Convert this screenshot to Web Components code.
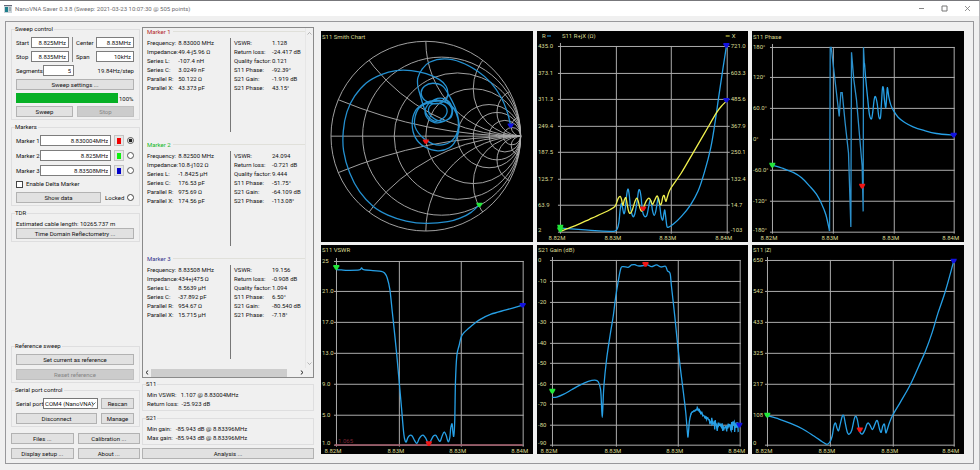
<!DOCTYPE html>
<html lang="en">
<head>
<meta charset="utf-8">
<title>NanoVNA Saver</title>
<style>
body { margin: 0; background: #f0f0f0; font: 6px/9px Roboto, "Liberation Sans", sans-serif; color: #111; }
</style>
</head>
<body>
<vna-window caption="NanoVNA Saver 0.3.8 (Sweep: 2021-03-23 10:07:30 @ 505 points)">
  <vna-controls></vna-controls>
  <vna-readout></vna-readout>
  <vna-charts></vna-charts>
</vna-window>

<script>
const define = (name, markup, setup) => {
  const template = document.createElement('template');
  customElements.define(name, class extends HTMLElement {
    constructor() { super(); this.attachShadow({ mode: 'open' }); }
    connectedCallback() {
      if (this.shadowRoot.childNodes.length) return;
      template.innerHTML = typeof markup === 'function' ? markup(this) : markup;
      this.shadowRoot.append(template.content.cloneNode(true));
      if (setup) setup(this, this.shadowRoot);
    }
  });
};

define('vna-window', el => `
<style>
  :host { display: block; box-sizing: border-box; min-height: 100vh; border-top: 1px solid #77777b; border-right: 1px solid #b5b5b8; }
  header { display: flex; align-items: center; gap: 3px; height: 15px; padding: 0 6px 0 4px; background: #fff; color: #6c6c70; }
  h1 { flex: 1; margin: 0; font: inherit; }
  nav { display: flex; gap: 12px; }
  nav button { width: 11px; height: 11px; padding: 0; border: 0; background: none; display: grid; place-items: center; }
  svg { display: block; }
  main { display: grid; grid-template-columns: 129px 172px minmax(0, 1fr); column-gap: 2px; margin: 5px 5px 4px; padding: 3px 9px 4px 5px; border: 1px solid #98989b; }
</style>
<header>
  <svg width="8" height="8" viewBox="0 0 8 8"><rect width="8" height="8" fill="#c9d3d8"/><rect width="8" height="1" fill="#667"/><rect x="1" y="2" width="3" height="5" fill="#1d7f8c"/><path d="M5 3h2M5 5h2" stroke="#79858c"/></svg>
  <h1>${el.getAttribute('caption')}</h1>
  <nav>
    <button aria-label="Minimize"><svg width="7" height="7"><path d="M1 3.5h5" stroke="#888"/></svg></button>
    <button aria-label="Maximize"><svg width="7" height="7"><path d="M1 1h5v5h-5z" fill="none" stroke="#777"/></svg></button>
    <button aria-label="Close"><svg width="7" height="7"><path d="M1 1l5 5M6 1l-5 5" stroke="#777" stroke-width=".8"/></svg></button>
  </nav>
</header>
<main><slot></slot></main>`);

define('vna-group', el => `
<style>
  :host { display: block; }
  fieldset { margin: 0; min-width: 0; padding: 0 5px 2px 4px; border: 1px solid #dededf; display: flow-root; }
  legend { margin: 0; padding: 0 1px 0 0; line-height: 8px; margin-left: -1px; }
  .body { display: grid; gap: 4px; padding-top: 4px; }
  :host([tight]) .body { gap: 3px; }
  :host([text]) .body { gap: 0; padding-top: 2px; }
</style>
<fieldset><legend>${el.getAttribute('caption')}</legend><div class="body"><slot></slot></div></fieldset>`);

define('vna-button', el => `
<style>
  :host { display: block; min-width: 0; }
  button { display: block; box-sizing: border-box; width: 100%; height: 11px; padding: 0; border: 1px solid #b2b2b2; background: #e1e1e1; font: inherit; line-height: 9px; color: #111; text-align: center; white-space: nowrap; }
  button:disabled { background: #cccccc; border-color: #c0c0c0; color: #858585; }
</style>
<button type="button" ${el.hasAttribute('disabled') ? 'disabled' : ''}><slot></slot></button>`);

define('vna-field', el => `
<style>
  :host { display: grid; grid-template-columns: var(--label, 15px) 1fr; align-items: center; }
  input { box-sizing: border-box; width: 100%; height: 11px; min-width: 0; margin: 0; padding: 0 2px; border: 1px solid #7d7d7d; background: #fff; font: inherit; color: #111; text-align: right; }
  label { white-space: nowrap; }
</style>
<label for="f">${el.getAttribute('label')}</label><input id="f" value="${el.getAttribute('value')}">`);

define('vna-marker-row', el => `
<style>
  :host { display: grid; grid-template-columns: minmax(0, 1fr) 10px 7px; column-gap: 3px; align-items: center; --label: 24px; }
  .swatch { width: 10px; height: 11px; padding: 0; border: 1px solid #c4c4c4; background: #e6e6e6; display: grid; place-items: center; }
  .swatch i { width: 4px; height: 6px; background: ${el.getAttribute('color')}; }
  input { appearance: none; box-sizing: border-box; width: 7px; height: 7px; margin: 0; border: 1px solid #555; border-radius: 50%; background: #fff; }
  input:checked { background: radial-gradient(#222 45%, #fff 60%); }
</style>
<vna-field label="${el.getAttribute('label')}" value="${el.getAttribute('value')}"></vna-field>
<button class="swatch" type="button" aria-label="${el.getAttribute('label')} colour"><i></i></button>
<input type="radio" aria-label="Select ${el.getAttribute('label')}" ${el.hasAttribute('checked') ? 'checked' : ''}>`);

define('vna-controls', `
<style>
  :host { display: flex; flex-direction: column; gap: 3px; }
  .ports { display: grid; grid-template-columns: 53px 1fr; align-items: start; }
  .ports > div { display: grid; gap: 3px; }
  .ports > div + div { border-left: 1px solid #8c8c8c; margin-left: 3px; padding-left: 3px; --label: 20px; }
  .row { display: flex; align-items: center; justify-content: space-between; gap: 4px; }
  .segments { width: 58px; --label: 27px; }
  .grow { flex: 1; }
  .bar { display: grid; grid-template-columns: 102px 1fr; gap: 1px; align-items: center; height: 10px; }
  progress { appearance: none; display: block; width: 100%; height: 10px; border: 0; background: #e6e6e6; }
  progress::-webkit-progress-bar { background: #e6e6e6; }
  progress::-webkit-progress-value { background: #06b025; }
  .tick, .radio { display: flex; align-items: center; gap: 3px; line-height: 8px; }
  .tick input, .radio input { appearance: none; box-sizing: border-box; width: 7px; height: 7px; margin: 0; border: 1px solid #444; background: #fff; }
  .radio input { border-radius: 50%; }
  .show { width: 85px; }
  .push { margin-top: auto; }
  .port { display: grid; grid-template-columns: 27px 55px 1fr; align-items: center; white-space: nowrap; }
  .port vna-button { margin-left: 3px; }
  .picker { position: relative; }
  select { appearance: none; display: block; box-sizing: border-box; width: 100%; height: 11px; padding: 0 1px; border: 1px solid #777; border-radius: 0; background: #fff; font: inherit; color: #111; }
  .picker svg { position: absolute; right: 2px; top: 4px; pointer-events: none; }
  .narrow { width: 33px; }
  .foot { display: grid; grid-template-columns: 1fr 1fr; gap: 4px; padding-top: 3px; }
  .two { display: grid; grid-template-columns: 1fr 1fr; gap: 4px; }
</style>
<vna-group caption="Sweep control" tight>
  <div class="ports">
    <div><vna-field label="Start" value="8.825MHz"></vna-field><vna-field label="Stop" value="8.835MHz"></vna-field></div>
    <div><vna-field label="Center" value="8.83MHz"></vna-field><vna-field label="Span" value="10kHz"></vna-field></div>
  </div>
  <div class="row"><vna-field class="segments" label="Segments" value="5"></vna-field><span>19.84Hz/step</span></div>
  <vna-button>Sweep settings ...</vna-button>
  <div class="bar"><progress max="100" value="100" aria-label="Sweep progress"></progress><span>100%</span></div>
  <div class="two"><vna-button>Sweep</vna-button><vna-button disabled>Stop</vna-button></div>
</vna-group>
<vna-group caption="Markers">
  <vna-marker-row label="Marker 1" value="8.830004MHz" color="#f00000" checked></vna-marker-row>
  <vna-marker-row label="Marker 2" value="8.825MHz" color="#10f010"></vna-marker-row>
  <vna-marker-row label="Marker 3" value="8.83508MHz" color="#0000c8"></vna-marker-row>
  <label class="tick"><input type="checkbox">Enable Delta Marker</label>
  <div class="row"><vna-button class="show">Show data</vna-button><label class="radio">Locked<input type="radio"></label></div>
</vna-group>
<vna-group caption="TDR" text>
  <span>Estimated cable length: 10265.737 m</span>
  <vna-button>Time Domain Reflectometry ...</vna-button>
</vna-group>
<vna-group class="push" caption="Reference sweep">
  <vna-button>Set current as reference</vna-button>
  <vna-button disabled>Reset reference</vna-button>
</vna-group>
<vna-group caption="Serial port control">
  <div class="port"><label for="port">Serial port</label>
    <span class="picker"><select id="port"><option>COM4 (NanoVNA)</option></select><svg width="5" height="3"><path d="M.5.5l2 2 2-2" fill="none" stroke="#444" stroke-width=".8"/></svg></span>
    <vna-button>Rescan</vna-button></div>
  <div class="row"><vna-button class="grow">Disconnect</vna-button><vna-button class="narrow">Manage</vna-button></div>
</vna-group>
<div class="foot">
  <vna-button>Files ...</vna-button><vna-button>Calibration ...</vna-button>
  <vna-button>Display setup ...</vna-button><vna-button>About ...</vna-button>
</div>`);

const LEFT = ['Frequency:', 'Impedance:', 'Series L:', 'Series C:', 'Parallel R:', 'Parallel X:'];
const RIGHT = ['VSWR:', 'Return loss:', 'Quality factor:', 'S11 Phase:', 'S21 Gain:', 'S21 Phase:'];
define('vna-marker-data', el => {
  const v = el.getAttribute('values').split('|');
  const table = (names, from) => `<table>${names.map((n, i) => `<tr><th scope="row">${n}</th><td>${v[from + i]}</td></tr>`).join('')}</table>`;
  return `
<style>
  :host { display: flex; flex-direction: column; }
  h2 { display: flex; align-items: center; gap: 2px; margin: 0; font: inherit; line-height: 7px; color: ${el.getAttribute('color')}; }
  h2::after { content: ""; flex: 1; height: 1px; background: #e0e0da; }
  .cols { flex: 1; display: grid; grid-template-columns: 83px 1fr; margin: 3px 0 9px; }
  .cols > * + * { border-left: 1px solid #777; padding-left: 3px; }
  table { border-collapse: collapse; }
  th, td { padding: 0; font-weight: normal; text-align: left; line-height: 9px; white-space: nowrap; }
  th { min-width: 31px; }
  .wide th { min-width: 38px; }
</style>
<h2>${el.getAttribute('caption')}</h2>
<div class="cols"><div>${table(LEFT, 0)}</div><div class="wide">${table(RIGHT, 6)}</div></div>`;
});

define('vna-readout', `
<style>
  :host { display: flex; flex-direction: column; gap: 3px; padding-top: 2px; }
  .list { flex: 1; display: grid; grid-template-columns: 1fr 7px; grid-template-rows: 1fr 9px; border: 1px solid #8a8a8a; margin-bottom: -1px; }
  .items { display: flex; flex-direction: column; padding-left: 4px; border-right: 1px solid #e6e6e6; }
  .items > * { flex: 1; }
  .v { display: flex; flex-direction: column; justify-content: space-between; align-items: center; padding: 3px 0; }
  .h { display: grid; grid-template-columns: 8px 136px 1fr; align-items: center; }
  .thumb { height: 8px; background: #cdcdcd; }
  .h button:last-child { justify-self: end; }
  button { padding: 0; border: 0; background: none; width: 8px; height: 8px; display: grid; place-items: center; }
  .v button { width: 6px; height: 4px; }
  svg { display: block; }
</style>
<div class="list">
  <div class="items">
    <vna-marker-data caption="Marker 1" color="#b3262b" values="8.83000 MHz|49.4-j5.96 Ω|-107.4 nH|3.0249 nF|50.122 Ω|43.373 pF|1.128|-24.417 dB|0.121|-92.39°|-1.919 dB|43.15°"></vna-marker-data>
    <vna-marker-data caption="Marker 2" color="#12b81e" values="8.82500 MHz|10.8-j102 Ω|-1.8425 µH|176.53 pF|975.69 Ω|174.56 pF|24.094|-0.721 dB|9.444|-51.75°|-64.109 dB|-113.08°"></vna-marker-data>
    <vna-marker-data caption="Marker 3" color="#33338c" values="8.83508 MHz|434+j475 Ω|8.5639 µH|-37.892 pF|954.67 Ω|15.715 µH|19.156|-0.908 dB|1.094|6.50°|-80.540 dB|-7.18°"></vna-marker-data>
  </div>
  <div class="v"><button aria-label="Scroll up"><svg width="5" height="3"><path d="M.5 2.5l2-2 2 2" fill="none" stroke="#999" stroke-width=".7"/></svg></button><button aria-label="Scroll down"><svg width="5" height="3"><path d="M.5.5l2 2 2-2" fill="none" stroke="#999" stroke-width=".7"/></svg></button></div>
  <div class="h"><button aria-label="Scroll left"><svg width="4" height="5"><path d="M3.2.5l-2.2 2 2.2 2" fill="none" stroke="#222"/></svg></button><div class="thumb"></div><button aria-label="Scroll right"><svg width="4" height="5"><path d="M.8.5l2.2 2-2.2 2" fill="none" stroke="#222"/></svg></button></div>
</div>
<vna-group caption="S11" text><span>Min VSWR: &nbsp; 1.107 @ 8.83004MHz</span><span>Return loss: &nbsp;-25.923 dB</span></vna-group>
<vna-group caption="S21" text><span>Min gain: &nbsp; -85.943 dB @ 8.83396MHz</span><span>Max gain: &nbsp;-85.943 dB @ 8.83396MHz</span></vna-group>
<vna-button>Analysis ...</vna-button>`);

/* Traces are plotted on a grid three times finer than the chart's pixels. */
const smooth = pts => {
  let d = `M${pts[0]}`;
  for (let i = 0; i < pts.length - 1; i++) {
    const a = pts[i - 1] || pts[i], b = pts[i], c = pts[i + 1], e = pts[i + 2] || c;
    const k = (p, q, r, s) => [(p[0] + (r[0] - q[0]) * s).toFixed(1), (p[1] + (r[1] - q[1]) * s).toFixed(1)];
    d += `C${k(b, a, c, 1 / 6)} ${k(c, b, e, -1 / 6)} ${c}`;
  }
  return d;
};
const pairs = s => s.trim().split(/\s+/).map(p => p.split(',').map(Number));
const noise = (() => {
  let seed = 7; const out = [];
  const rnd = () => (seed = (seed * 16807) % 2147483647) / 2147483647;
  for (let x = 468; x <= 612; x += 1.5) {
    const mid = x < 487 ? 512 - (x - 468) * .8 : x < 530 ? 497 + (x - 487) * 1 : x < 550 ? 540 + (x - 530) * .6 : 551;
    const amp = x < 480 ? 2 : x < 530 ? 6 : 17;
    out.push(`${x},${(mid + (rnd() - .5) * 2 * amp).toFixed(1)}`);
  }
  return out.join(' ');
})();

const CHARTS = {
  rx: { title: 'S11 R+jX (Ω)', at: [25, 7], off: [2, 3], h: 211, x: [76, 242, 409, 575], y: [55, 135, 214, 295, 373, 454, 532, 612],
    left: ['435.0', '373.1', '311.3', '249.4', '187.5', '125.7', '63.9', '2'],
    right: ['721.0', '603.3', '485.6', '367.9', '250.1', '132.4', '14.7', '-103'],
    traces: [
      { c: '#27a0e6', d: '76,601 130,605 180,609 225,611 240,610 247,604 252,585 256,545 260,527 263,540 267,558 271,545 275,505 279,484 283,500 287,540 294,566 300,558 307,520 311,490 315,488 319,510 323,550 329,566 336,563 341,540 345,520 349,522 353,548 358,563 363,550 368,520 371,512 375,535 379,566 384,577 387,560 390,547 393,570 396,594 400,599 415,590 440,566 467,532 490,490 510,430 528,360 540,290 553,200 565,120 575,55' },
      { c: '#f0f04e', d: '76,611 100,602 130,590 165,574 200,558 225,546 241,535 250,512 256,506 260,515 264,533 268,518 273,510 277,530 281,550 286,557 293,545 300,522 306,511 310,520 315,540 320,551 326,540 334,520 342,511 347,517 353,530 358,521 364,508 368,505 372,517 376,531 380,527 384,508 388,503 391,515 394,520 400,500 409,480 440,435 475,375 510,315 545,255 560,235 575,220' }],
    marks: [['#22e63a', 76, 601], ['#22e63a', 76, 609], ['#f01616', 325, 546], ['#1212e0', 575, 55], ['#1212e0', 575, 220]],
    extra: '<text x="5" y="7">R</text><path d="M10 5h4" stroke="#27a0e6"/><path d="M189 5h4" stroke="#f0f04e"/><text x="195" y="7">X</text>' },
  phase: { title: 'S11 Phase', at: [1, 8], off: [2, 31], h: 211, x: [67, 250, 431, 612], y: [141, 232, 325, 418, 511, 604, 697],
    left: ['180°', '120°', '60.0°', '0°', '-60.0°', '-120°', '-180°'],
    traces: [
      { c: '#27a0e6', d: '67,496 100,506 130,518 155,534 180,560 200,584 215,612 228,645 239,694' },
      { c: '#2b8fca', line: 1, d: '239,694 241,142 244,142 268,350 273,278 277,278 286,370 296,460 303,682 305,157 312,240 320,300 337,500 340,635 341,142 344,200' },
      { c: '#27a0e6', d: '344,190 348,240 354,300 359,345 365,357 369,335 373,300 377,290 382,310 387,350 392,353 395,310 398,265 401,265 404,300 408,323 411,285 413,263 417,290 423,315 431,332 445,352 465,368 490,381 520,391 560,401 612,406' }],
    marks: [['#22e63a', 67, 499], ['#f01616', 337, 562], ['#1212e0', 612, 409]] },
  vswr: { title: 'S11 VSWR', at: [1, 7], off: [3, 2], h: 210, x: [55, 242, 430, 615], y: [53, 145, 238, 331, 423, 515, 606],
    left: ['25', '21.0', '17.0', '13.0', '9.0', '5.0', '1.0'],
    traces: [
      { c: '#a05a68', line: 1, d: '50,607 615,607' },
      { c: '#27a0e6', d: '55,80 70,81 90,82 124,81 131,75 137,80 165,83 190,85 200,90 208,105 216,140 223,205 231,280 237,340 242,395 250,485 258,575 264,598 270,585 276,578 283,580 290,593 297,602 304,588 310,580 317,578 324,587 333,604 341,590 347,580 354,578 361,589 367,596 373,580 379,568 385,578 391,597 396,585 399,555 403,543 405,565 408,580 411,530 413,420 417,340 424,308 430,283 438,270 460,250 485,231 520,214 565,201 615,187' }],
    marks: [['#22e63a', 55, 76], ['#f01616', 333, 606], ['#1212e0', 615, 190]],
    extra: '<text class="limit" x="17" y="198">1.065</text>' },
  gain: { title: 'S21 Gain (dB)', at: [1, 7], off: [2, 2], h: 210, x: [52, 242, 428, 614], y: [52, 115, 177, 238, 300, 361, 423, 484, 547, 606],
    left: ['0', '-10', '-20', '-30', '-40', '-50', '-60', '-70', '-80', '-90'],
    traces: [
      { c: '#27a0e6', d: '52,464 65,463 85,455 110,441 135,427 160,416 180,412 190,417 197,440 200,490 202,524 204,490 207,430 215,350 226,275 235,220 242,165 250,115 258,76 265,71 280,73 290,66 300,65 310,69 325,68 338,66 350,71 365,66 378,72 392,70 398,84 406,92 410,130 420,220 428,300 436,370 446,450 453,510 458,570 460,581 464,535 469,512' },
      { c: '#27a0e6', line: 1, d: noise }],
    marks: [['#22e63a', 52, 448], ['#f01616', 332, 67], ['#1212e0', 614, 550]] },
  z: { title: 'S11 |Z|', at: [1, 7], off: [218, 2], h: 210, x: [700, 887, 1076, 1260], y: [52, 145, 238, 331, 423, 515, 606],
    left: ['650', '542', '433', '325', '217', '108', '0'],
    traces: [
      { c: '#27a0e6', d: '700,519 735,529 770,542 805,558 840,580 865,597 879,605 888,598 895,580 900,550 905,541 909,555 914,564 919,545 925,521 930,520 935,545 941,570 947,574 954,562 961,530 966,520 971,533 977,565 985,574 993,562 999,545 1004,541 1010,550 1016,561 1022,548 1028,534 1032,537 1037,558 1042,569 1047,550 1052,545 1056,570 1060,562 1067,540 1077,517 1100,478 1130,425 1155,370 1175,325 1195,270 1213,210 1235,145 1260,55' }],
    marks: [['#22e63a', 700, 520], ['#f01616', 978, 564], ['#1212e0', 1260, 57]] }
};

const FRAME = `
<style>
  :host { display: block; min-width: 0; }
  svg { display: block; width: 100%; height: auto; background: #000; }
  text { font: 6px Roboto, "Liberation Sans", sans-serif; fill: #dcdc96; }
  .limit { fill: #7c2434; }
  .trace { fill: none; vector-effect: non-scaling-stroke; stroke-width: 1.3; }
  .grid { fill: none; stroke: #acacac; stroke-width: 1; }
</style>`;

define('vna-chart', el => {
  const k = CHARTS[el.getAttribute('kind')];
  const px = x => Math.round(x / 3 - k.off[0]), py = y => Math.round(y / 3 - k.off[1]);
  const X = k.x.map(px), Y = k.y.map(py), end = X[3], last = Y.length - 1, foot = Y[last];
  const freq = ['8.82M', '8.83M', '8.83M', '8.84M'];
  const base = i => Y[i] + (i === last ? 0 : 2);
  const bars = Y.map(y => `M${X[0] - 2} ${y + .5}H${end + (k.right ? 3 : 1)}`).join('') + X.map((x, i) => `M${x + .5} ${Y[0] - (i ? 0 : 3)}V${foot + 2}`).join('');
  return FRAME + `<svg viewBox="0 0 212 ${k.h}" role="img" aria-label="${k.title}">
  <text x="${k.at[0]}" y="${k.at[1]}">${k.title}</text>
  <path class="grid" d="${bars}"/>
  ${k.left.map((t, i) => `<text x="1" y="${base(i)}">${t}</text>`).join('')}
  ${(k.right || []).map((t, i) => `<text x="${end + 4}" y="${base(i)}">${t}</text>`).join('')}
  ${freq.map((t, i) => `<text x="${X[i] - 3}" y="${foot + 8}" text-anchor="middle">${t}</text>`).join('')}
  ${k.extra || ''}
  <g transform="translate(${-k.off[0]} ${-k.off[1]}) scale(.33333)">
  ${k.traces.map(t => `<path class="trace" stroke="${t.c}" d="${t.line ? 'M' + t.d : smooth(pairs(t.d))}"/>`).join('')}
  ${k.marks.map(([c, x, y]) => `<path fill="${c}" d="M${x - 9} ${y - 10}h18v4l-6 10h-6l-6-10z"/>`).join('')}
  </g></svg>`;
});

define('vna-smith', () => {
  const cx = 324, cy = 325, R = 285;
  const res = [.2, .5, 1, 2, 3, 5, 10].map(r => `<circle cx="${cx + R * r / (1 + r)}" cy="${cy}" r="${R / (1 + r)}"/>`).join('');
  const rea = [.2, .5, 1, 2, 4, 10].map(x => [1, -1].map(s => `<circle cx="${cx + R}" cy="${cy + s * R / x}" r="${R / x}"/>`).join('')).join('');
  const line = pairs('485,531 460,554 430,570 390,582 325,587 265,580 210,562 167,537 125,492 95,435 77,370 76,310 87,252 110,205 145,165 190,140 235,128 280,128 325,137 365,155 385,175 390,200 380,220 350,228 322,218 310,195 320,175 345,166 375,175 398,210 416,250 424,295 415,335 395,360 360,369 320,357 293,330 283,290 292,250 318,227 355,217 390,225 415,255 422,295 410,330 380,350 345,348 310,325 290,290 300,245 330,225 370,220 398,235 400,262 380,280 350,284 325,265 325,238 350,215 380,213 402,235 400,268 370,280 340,265 332,245 345,228 375,230 388,250 375,272 350,280 328,262 317,235 308,205 300,175 300,150 312,125 335,103 380,93 430,103 480,130 520,165 550,208 568,250 579,293');
  return FRAME + `<svg viewBox="0 0 212 211" role="img" aria-label="S11 Smith Chart">
  <defs><clipPath id="disc"><circle cx="${cx}" cy="${cy}" r="${R}"/></clipPath></defs>
  <text x="1" y="8">S11 Smith Chart</text>
  <g transform="translate(-3 -3) scale(.33333)">
    <g fill="none" stroke="#acacac" stroke-width="2.8"><circle cx="${cx}" cy="${cy}" r="${R}"/><path d="M${cx - R} ${cy}h${2 * R}"/>${res}<g clip-path="url(#disc)">${rea}</g></g>
    <path class="trace" stroke="#2490d0" d="${smooth(line)}"/>
    <path fill="#f01616" d="M315 335h18v4l-6 9h-6l-6-9z"/><path fill="#22e63a" d="M476 525h18v4l-6 9h-6l-6-9z"/><path fill="#1212e0" d="M570 287h18v4l-6 9h-6l-6-9z"/>
  </g></svg>`;
});

define('vna-charts', `
<style>
  :host { display: grid; grid-template-columns: repeat(3, minmax(0, 1fr)); gap: 3px 4px; align-content: start; padding: 6px 0 5px 5px; }
</style>
<vna-smith></vna-smith><vna-chart kind="rx"></vna-chart><vna-chart kind="phase"></vna-chart>
<vna-chart kind="vswr"></vna-chart><vna-chart kind="gain"></vna-chart><vna-chart kind="z"></vna-chart>`);
</script>
</body>
</html>
